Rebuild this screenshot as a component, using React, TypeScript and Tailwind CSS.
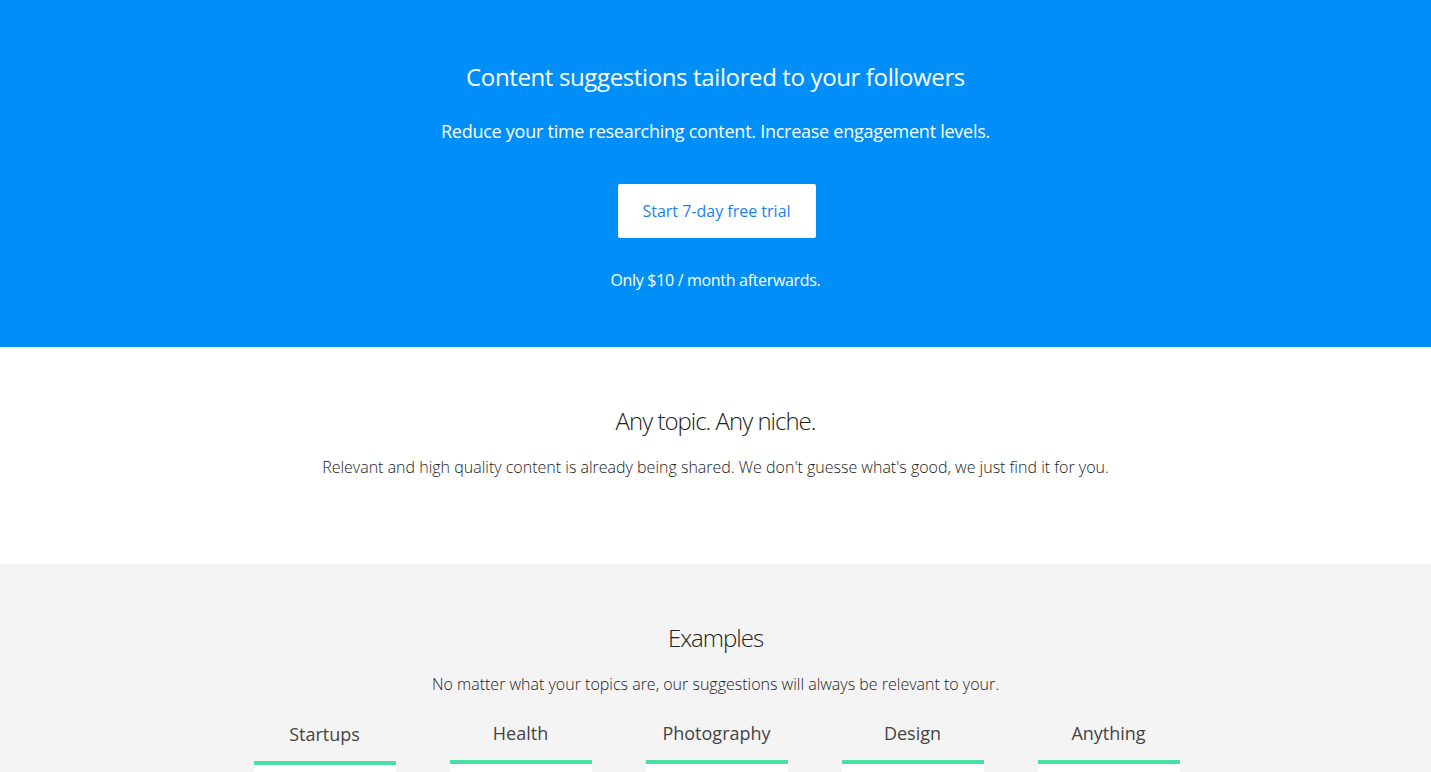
const TOPICS = ['Startups', 'Health', 'Photography', 'Design', 'Anything'];

export default function App() {
  return (
    <div className="min-h-screen bg-[#f4f4f4] font-['Open_Sans',sans-serif]">
      {/* Hero */}
      <section className="bg-[#008ff8] text-white text-center pt-[59px] pb-[55px]">
        <h1 className="text-[24px] leading-[36px] font-normal tracking-[-0.37px]">
          Content suggestions tailored to your followers
        </h1>
        <p className="mt-[23px] text-[18px] leading-[27px] tracking-[-0.26px]">
          Reduce your time researching content. Increase engagement levels.
        </p>
        <div className="mt-[39px] flex justify-center">
          <button className="ml-[2px] w-[198px] h-[54px] bg-white rounded-[2px] text-[16px] text-[#1a82ee]">
            Start 7-day free trial
          </button>
        </div>
        <p className="mt-[30px] text-[16px] leading-[24px] tracking-[-0.32px]">Only $10 / month afterwards.</p>
      </section>

      {/* Any topic */}
      <section className="bg-white text-center pt-[56px] pb-[85px] text-[#222]">
        <h2 className="text-[24px] leading-[36px] font-light tracking-[-1px]">Any topic. Any niche.</h2>
        <p className="mt-[16px] text-[16px] leading-[24px] font-light">
          Relevant and high quality content is already being shared. We don&apos;t guesse what&apos;s good, we just find it for you.
        </p>
      </section>

      {/* Examples */}
      <section className="text-center pt-[56px] pb-10 text-[#222]">
        <h2 className="text-[24px] leading-[36px] font-light tracking-[-1px]">Examples</h2>
        <p className="mt-[16px] text-[16px] leading-[24px] font-light">
          No matter what your topics are, our suggestions will always be relevant to your.
        </p>
        <div className="mt-[24px] ml-[2px] flex justify-center gap-[54px]">
          {TOPICS.map((t, i) => (
            <div key={t} className={`w-[142px] ${i === 0 ? 'mt-[1px]' : ''}`}>
              <div className="text-[18px] leading-[27px] text-[#444]">{t}</div>
              <div className="mt-[13px] h-[4px] bg-[#48e0a4]" />
              <div className="h-[220px] bg-white" />
            </div>
          ))}
        </div>
      </section>
    </div>
  );
}
